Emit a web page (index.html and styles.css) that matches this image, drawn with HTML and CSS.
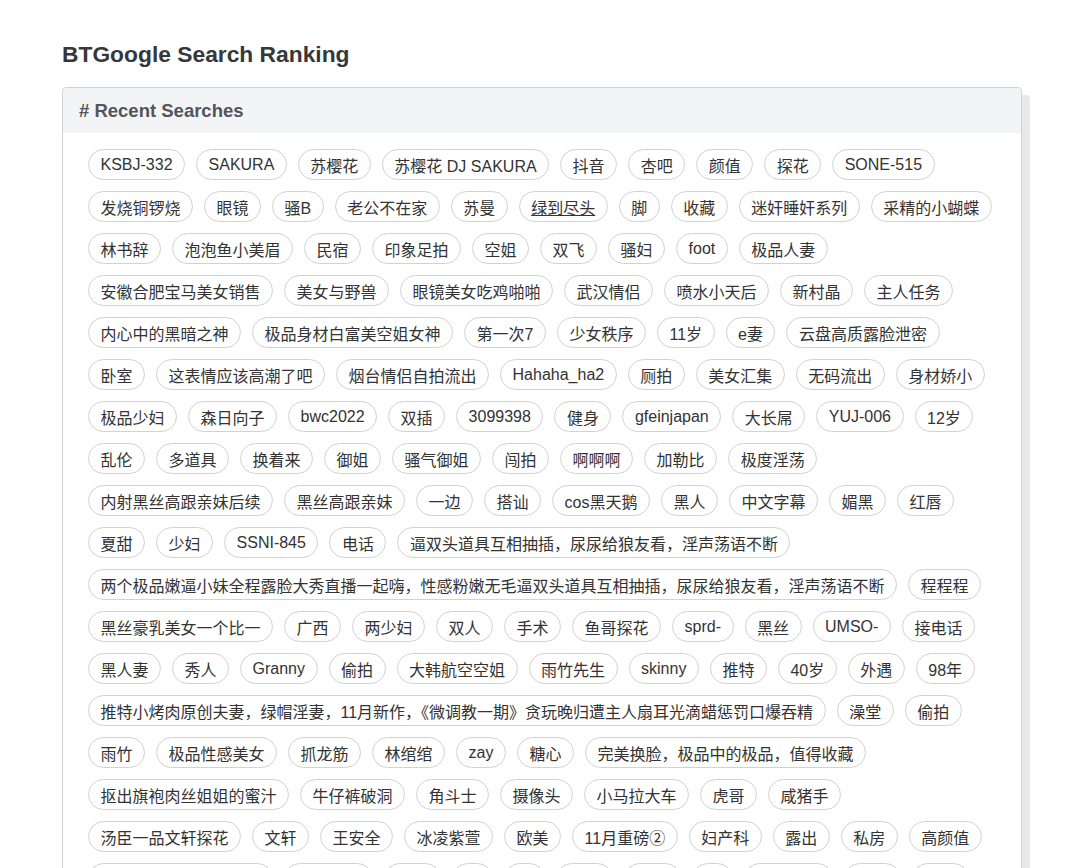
FILE: index.html
```html
<!DOCTYPE html>
<html lang="zh-CN">
<head>
<meta charset="utf-8">
<title>BTGoogle Search Ranking</title>
<link rel="stylesheet" href="styles.css">
</head>
<body>
<div class="topbar"></div>
<main class="page">
  <h1 class="page-title">BTGoogle Search Ranking</h1>
  <section class="card">
    <header class="card-header"># Recent Searches</header>
    <div class="card-body">
      <div class="tag-row">
        <a class="tag">KSBJ-332</a><a class="tag">SAKURA</a><a class="tag">苏樱花</a><a class="tag">苏樱花 DJ SAKURA</a><a class="tag">抖音</a><a class="tag">杏吧</a><a class="tag">颜值</a><a class="tag">探花</a><a class="tag">SONE-515</a>
      </div>
      <div class="tag-row">
        <a class="tag">发烧铜锣烧</a><a class="tag">眼镜</a><a class="tag">骚B</a><a class="tag">老公不在家</a><a class="tag">苏曼</a><a class="tag tag-hover">绿到尽头</a><a class="tag">脚</a><a class="tag">收藏</a><a class="tag">迷奸睡奸系列</a><a class="tag">采精的小蝴蝶</a>
      </div>
      <div class="tag-row">
        <a class="tag">林书辞</a><a class="tag">泡泡鱼小美眉</a><a class="tag">民宿</a><a class="tag">印象足拍</a><a class="tag">空姐</a><a class="tag">双飞</a><a class="tag">骚妇</a><a class="tag">foot</a><a class="tag">极品人妻</a>
      </div>
      <div class="tag-row">
        <a class="tag">安徽合肥宝马美女销售</a><a class="tag">美女与野兽</a><a class="tag">眼镜美女吃鸡啪啪</a><a class="tag">武汉情侣</a><a class="tag">喷水小天后</a><a class="tag">新村晶</a><a class="tag">主人任务</a>
      </div>
      <div class="tag-row">
        <a class="tag">内心中的黑暗之神</a><a class="tag">极品身材白富美空姐女神</a><a class="tag">第一次7</a><a class="tag">少女秩序</a><a class="tag">11岁</a><a class="tag">e妻</a><a class="tag">云盘高质露脸泄密</a>
      </div>
      <div class="tag-row">
        <a class="tag">卧室</a><a class="tag">这表情应该高潮了吧</a><a class="tag">烟台情侣自拍流出</a><a class="tag">Hahaha_ha2</a><a class="tag">厕拍</a><a class="tag">美女汇集</a><a class="tag">无码流出</a><a class="tag">身材娇小</a>
      </div>
      <div class="tag-row">
        <a class="tag">极品少妇</a><a class="tag">森日向子</a><a class="tag">bwc2022</a><a class="tag">双插</a><a class="tag">3099398</a><a class="tag">健身</a><a class="tag">gfeinjapan</a><a class="tag">大长屌</a><a class="tag">YUJ-006</a><a class="tag">12岁</a>
      </div>
      <div class="tag-row">
        <a class="tag">乱伦</a><a class="tag">多道具</a><a class="tag">换着来</a><a class="tag">御姐</a><a class="tag">骚气御姐</a><a class="tag">闯拍</a><a class="tag">啊啊啊</a><a class="tag">加勒比</a><a class="tag">极度淫荡</a>
      </div>
      <div class="tag-row">
        <a class="tag">内射黑丝高跟亲妹后续</a><a class="tag">黑丝高跟亲妹</a><a class="tag">一边</a><a class="tag">搭讪</a><a class="tag">cos黑天鹅</a><a class="tag">黑人</a><a class="tag">中文字幕</a><a class="tag">媚黑</a><a class="tag">红唇</a>
      </div>
      <div class="tag-row">
        <a class="tag">夏甜</a><a class="tag">少妇</a><a class="tag">SSNI-845</a><a class="tag">电话</a><a class="tag">逼双头道具互相抽插，尿尿给狼友看，淫声荡语不断</a>
      </div>
      <div class="tag-row">
        <a class="tag">两个极品嫩逼小妹全程露脸大秀直播一起嗨，性感粉嫩无毛逼双头道具互相抽插，尿尿给狼友看，淫声荡语不断</a><a class="tag">程程程</a>
      </div>
      <div class="tag-row">
        <a class="tag">黑丝豪乳美女一个比一</a><a class="tag">广西</a><a class="tag">两少妇</a><a class="tag">双人</a><a class="tag">手术</a><a class="tag">鱼哥探花</a><a class="tag">sprd-</a><a class="tag">黑丝</a><a class="tag">UMSO-</a><a class="tag">接电话</a>
      </div>
      <div class="tag-row">
        <a class="tag">黑人妻</a><a class="tag">秀人</a><a class="tag">Granny</a><a class="tag">偷拍</a><a class="tag">大韩航空空姐</a><a class="tag">雨竹先生</a><a class="tag">skinny</a><a class="tag">推特</a><a class="tag">40岁</a><a class="tag">外遇</a><a class="tag">98年</a>
      </div>
      <div class="tag-row">
        <a class="tag">推特小烤肉原创夫妻，绿帽淫妻，11月新作，《微调教一期》贪玩晚归遭主人扇耳光滴蜡惩罚口爆吞精</a><a class="tag">澡堂</a><a class="tag">偷拍</a>
      </div>
      <div class="tag-row">
        <a class="tag">雨竹</a><a class="tag">极品性感美女</a><a class="tag">抓龙筋</a><a class="tag">林绾绾</a><a class="tag">zay</a><a class="tag">糖心</a><a class="tag">完美换脸，极品中的极品，值得收藏</a>
      </div>
      <div class="tag-row">
        <a class="tag">抠出旗袍肉丝姐姐的蜜汁</a><a class="tag">牛仔裤破洞</a><a class="tag">角斗士</a><a class="tag">摄像头</a><a class="tag">小马拉大车</a><a class="tag">虎哥</a><a class="tag">咸猪手</a>
      </div>
      <div class="tag-row">
        <a class="tag">汤臣一品文轩探花</a><a class="tag">文轩</a><a class="tag">王安全</a><a class="tag">冰凌紫萱</a><a class="tag">欧美</a><a class="tag">11月重磅②</a><a class="tag">妇产科</a><a class="tag">露出</a><a class="tag">私房</a><a class="tag">高颜值</a>
      </div>
      <div class="tag-row">
        <a class="tag">网红主播直播精彩合集</a><a class="tag">国产自拍</a><a class="tag">日本</a><a class="tag">腿</a><a class="tag">丝</a><a class="tag">学生</a><a class="tag">模特</a><a class="tag">猫</a><a class="tag">旅行日记</a><a class="tag">瑜伽</a><a class="tag">教师</a>
      </div>
    </div>
  </section>
</main>
</body>
</html>
```
FILE: styles.css
```css
* {
  box-sizing: border-box;
}

html, body {
  margin: 0;
  padding: 0;
  background: #ffffff;
}

body {
  font-family: "Liberation Sans", "Noto Sans CJK SC", sans-serif;
  color: #333333;
}

.topbar {
  height: 0;
  box-shadow: 0 0 4px rgba(0, 0, 0, 0.12);
}

.page {
  padding: 0 0 40px 62px;
}

.page-title {
  margin: 0 0 19px 0;
  padding-top: 41px;
  font-size: 22.8px;
  line-height: 27px;
  font-weight: 700;
  color: #363738;
}

.card {
  width: 960px;
  border: 1px solid #d3d3d3;
  border-radius: 4px;
  background: #ffffff;
  box-shadow: 8px 8px 0 #e8e8e8;
}

.card-header {
  padding: 12px 16px;
  line-height: 21px;
  font-size: 18.5px;
  font-weight: 700;
  color: #52555a;
  background: #f3f4f6;
  border-radius: 4px 4px 0 0;
}

.card-body {
  padding: 16px 25px 20px 25px;
  display: flex;
  flex-direction: column;
  row-gap: 11px;
}

.tag-row {
  display: flex;
  column-gap: 11px;
}

.tag {
  display: inline-flex;
  align-items: center;
  height: 31px;
  padding: 0 11.5px;
  border: 1px solid #d2d2d2;
  border-radius: 16px;
  font-size: 16px;
  color: #333333;
  white-space: nowrap;
  text-decoration: none;
  cursor: pointer;
}

.tag-hover {
  text-decoration: underline;
}
```
